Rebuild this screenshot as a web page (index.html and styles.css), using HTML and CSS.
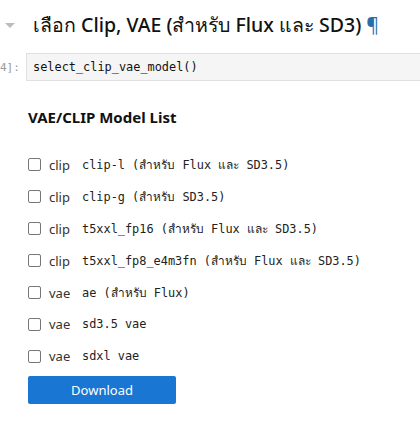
FILE: index.html
```html
<!DOCTYPE html>
<html>
<head>
<meta charset="utf-8">
<link rel="stylesheet" href="styles.css">
</head>
<body>
<div class="md-cell">
  <div class="collapser"><span class="caret"></span></div>
  <h2 class="md-heading">เลือก Clip, VAE (สำหรับ Flux และ SD3) <a class="anchor">¶</a></h2>
</div>
<div class="code-cell">
  <div class="prompt"><span>4]:</span></div>
  <div class="code-input">select_clip_vae_model()</div>
</div>
<div class="output">
  <h3 class="out-title">VAE/CLIP Model List</h3>
  <ul class="model-list">
    <li class="row"><span class="box"></span><span class="kind">clip</span><span class="name">clip-l (สำหรับ Flux และ SD3.5)</span></li>
    <li class="row"><span class="box"></span><span class="kind">clip</span><span class="name">clip-g (สำหรับ SD3.5)</span></li>
    <li class="row"><span class="box"></span><span class="kind">clip</span><span class="name">t5xxl_fp16 (สำหรับ Flux และ SD3.5)</span></li>
    <li class="row"><span class="box"></span><span class="kind">clip</span><span class="name">t5xxl_fp8_e4m3fn (สำหรับ Flux และ SD3.5)</span></li>
    <li class="row"><span class="box"></span><span class="kind">vae</span><span class="name">ae (สำหรับ Flux)</span></li>
    <li class="row"><span class="box"></span><span class="kind">vae</span><span class="name">sd3.5 vae</span></li>
    <li class="row"><span class="box"></span><span class="kind">vae</span><span class="name">sdxl vae</span></li>
  </ul>
  <button class="download">Download</button>
</div>
</body>
</html>
```
FILE: styles.css
```css
html, body {
  margin: 0;
  padding: 0;
  background: #ffffff;
  overflow: hidden;
}
body {
  font-family: "Noto Sans", "Open Sans", sans-serif;
  color: #222;
}
.md-cell {
  display: flex;
  align-items: center;
  height: 46px;
  padding-top: 4px;
  box-sizing: border-box;
}
.collapser {
  width: 33px;
  display: flex;
  justify-content: flex-start;
  padding-left: 5px;
  box-sizing: border-box;
}
.caret {
  width: 0;
  height: 0;
  border-left: 5px solid transparent;
  border-right: 5px solid transparent;
  border-top: 5px solid #bdbdbd;
}
.md-heading {
  margin: 0;
  font-size: 19.5px;
  font-weight: 500;
  color: #111;
  white-space: nowrap;
}
.anchor {
  color: #296eaa;
  font-weight: 400;
  text-decoration: none;
}
.code-cell {
  display: flex;
  align-items: stretch;
  margin-top: 7px;
}
.prompt {
  width: 26px;
  display: flex;
  justify-content: flex-start;
  box-sizing: border-box;
  font-family: "DejaVu Sans Mono", monospace;
  font-size: 11px;
  color: #999;
  align-items: center;
  white-space: nowrap;
}
.code-input {
  flex: 1;
  margin-right: -10px;
  height: 28px;
  box-sizing: border-box;
  background: #f5f5f5;
  border: 1px solid #e0e0e0;
  padding: 0 6px;
  display: flex;
  align-items: center;
  font-family: "DejaVu Sans Mono", monospace;
  font-size: 11.9px;
  color: #111;
}
.output {
  padding-left: 28px;
  padding-top: 26px;
}
.out-title {
  margin: 0;
  font-size: 15px;
  font-weight: 700;
  color: #111;
  line-height: 20px;
}
.model-list {
  list-style: none;
  margin: 0;
  padding: 0;
  padding-top: 22px;
}
.row {
  display: flex;
  align-items: center;
  height: 31.9px;
}
.box {
  width: 13px;
  height: 13px;
  box-sizing: border-box;
  border: 1px solid #767676;
  border-radius: 2px;
  background: #fff;
}
.kind {
  width: 33px;
  margin-left: 8px;
  font-size: 13px;
  color: #333;
}
.name {
  font-family: "DejaVu Sans Mono", monospace;
  font-size: 11.9px;
  color: #222;
  white-space: pre;
}
.download {
  margin-top: 4px;
  width: 148px;
  height: 28px;
  border: none;
  border-radius: 2px;
  background: #1976d2;
  color: #fff;
  font-family: "Noto Sans", sans-serif;
  font-size: 13px;
  padding: 0;
}
```
